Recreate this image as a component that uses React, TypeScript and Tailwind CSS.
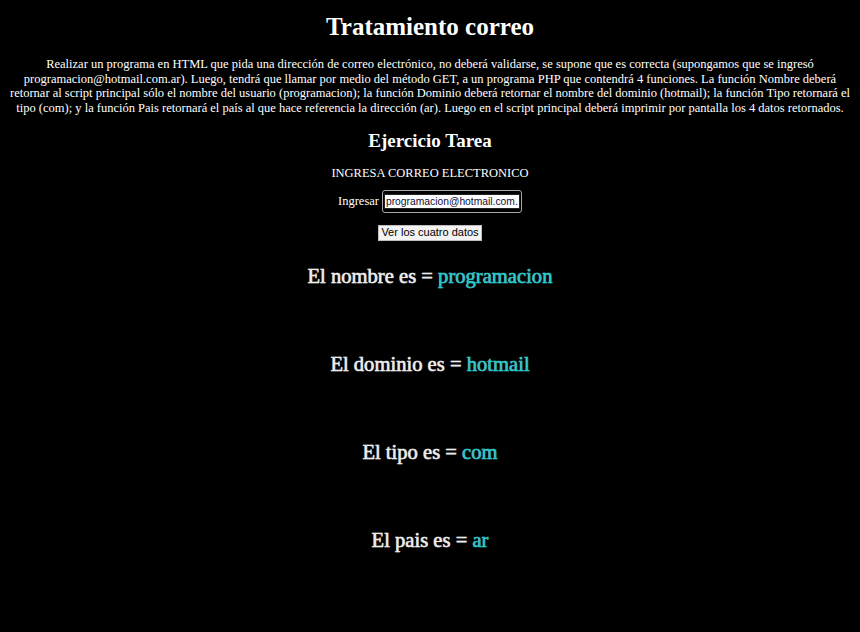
import React from "react";

export default function App() {
  const serif = { fontFamily: '"Liberation Serif", "Times New Roman", serif' };
  const rows: [string, string][] = [
    ["El nombre es = ", "programacion"],
    ["El dominio es = ", "hotmail"],
    ["El tipo es = ", "com"],
    ["El pais es = ", "ar"],
  ];
  return (
    <div className="w-[860px] h-[632px] bg-black text-white text-center overflow-hidden font-['Liberation_Serif','Times_New_Roman',serif]">
      <h1 className="pt-[12px] text-[25px] leading-[30px] font-bold">Tratamiento correo</h1>
      <p className="mt-[15px] px-[9px] text-[12.5px] leading-[14.7px]">
        Realizar un programa en HTML que pida una dirección de correo electrónico, no deberá validarse, se supone que es correcta (supongamos que se ingresó programacion@hotmail.com.ar). Luego, tendrá que llamar por medio del método GET, a un programa PHP que contendrá 4 funciones. La función Nombre deberá retornar al script principal sólo el nombre del usuario (programacion); la función Dominio deberá retornar el nombre del dominio (hotmail); la función Tipo retornará el tipo (com); y la función Pais retornará el país al que hace referencia la dirección (ar). Luego en el script principal deberá imprimir por pantalla los 4 datos retornados.
      </p>
      <h2 className="mt-[14px] text-[19px] leading-[22px] font-bold">Ejercicio Tarea</h2>
      <div className="mt-[14px] text-[12.5px] leading-[15px]">INGRESA CORREO ELECTRONICO</div>
      <div className="mt-[9px] flex justify-center items-center gap-[3px] text-[12.5px]">
        <span>Ingresar</span>
        <div className="rounded-[3px] border border-[#a8a8a8] p-[1px]">
          <input
            readOnly
            value="programacion@hotmail.com.ar"
            className="w-[136px] h-[15px] border border-[#222] bg-white text-[#10103a] text-[10.3px] px-[1px] leading-[13px] outline-none font-['Liberation_Sans',Arial,sans-serif]"
          />
        </div>
      </div>
      <div className="mt-[12px] flex justify-center">
        <button className="w-[104px] h-[16px] bg-[#f3f3f3] border border-[#bdbdbd] text-black text-[11px] leading-[13px] font-['Liberation_Sans',Arial,sans-serif]">
          Ver los cuatro datos
        </button>
      </div>
      <div className="mt-[23px] flex flex-col items-center gap-[64px]" style={serif}>
        {rows.map(([a, b]) => (
          <div key={b} className="text-[20.6px] leading-[24px] [-webkit-text-stroke:0.4px_currentColor] [text-shadow:0_0_1px_rgba(255,255,255,0.7)]">
            <span className="text-[#ececec]">{a}</span>
            <span className="text-[#1ec8cc]">{b}</span>
          </div>
        ))}
      </div>
    </div>
  );
}
